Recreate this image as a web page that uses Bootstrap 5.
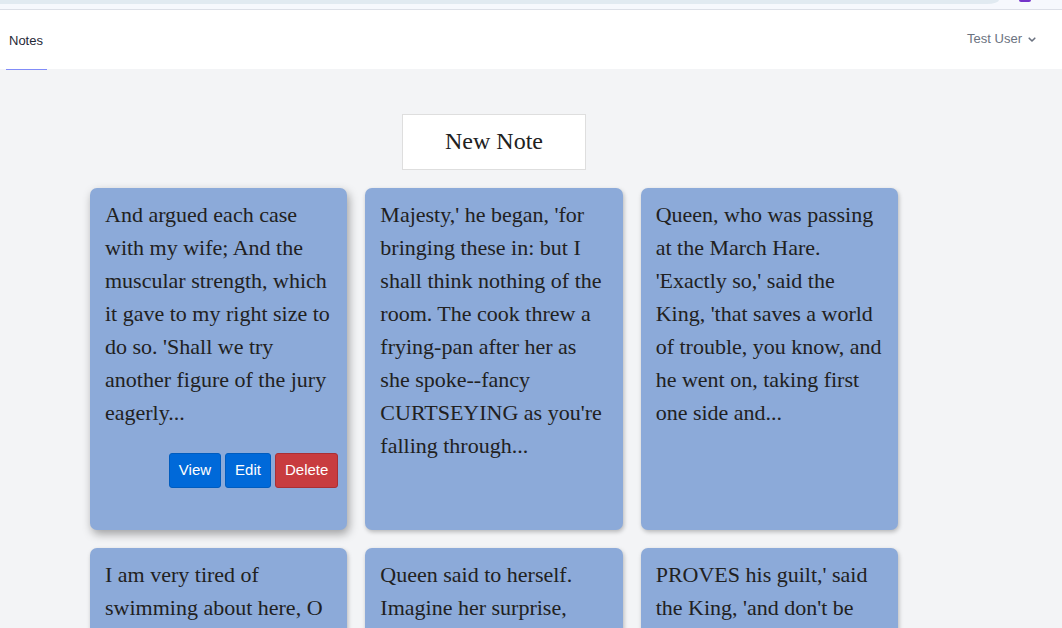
<!DOCTYPE html>
<html lang="en">
<head>
<meta charset="utf-8">
<meta name="viewport" content="width=device-width, initial-scale=1">
<title>Notes</title>
<link href="https://cdn.jsdelivr.net/npm/bootstrap@5.3.0/dist/css/bootstrap.min.css" rel="stylesheet">
<style>
  body { background: #f3f4f6; color: #212121; font-family: "Liberation Sans", Arial, sans-serif; font-size: 13px; }
  .browser-edge { height: 10px; background: #f6f8fd; border-bottom: 1px solid #dcdfe7; }
  .address-bar { height: 4px; background: #e1eaf1; border-bottom-right-radius: 12px 4px; margin-right: 63px; }
  .extension-dot { top: 0; right: 31px; width: 12px; height: 2px; background: #7434c9; border-radius: 0 0 3px 3px; }
  .site-nav { height: 60px; padding: 0 24px 0 6px; background: linear-gradient(#fff 59px, #f3f4f6 59px); }
  .tab-link { padding: 2px 4px 0 3px; color: #1f2937; border-bottom: 1px solid #818cf8; }
  .user-menu { padding: 0 0 3px; font-size: 13px; color: #6b7280; gap: 4px; }
  .board { padding: 44px 164px 18px 90px; font-family: "Liberation Serif", "Times New Roman", serif; }
  .new-note { width: 184px; height: 56px; padding: 0 0 2px; background: #fff; border: 1px solid #dedede; border-radius: 0; color: #212121; font-size: 24px; }
  .notes-grid { display: grid; grid-template-columns: repeat(3, 1fr); grid-auto-rows: 342px; gap: 18px; margin-top: 18px; }
  .note { padding: 10px 9px 10px 15px; background: #8caad9; border-radius: 7px; box-shadow: 1px 2px 4px rgba(0,0,0,.25); }
  .note-raised { box-shadow: 2px 4px 10px rgba(0,0,0,.35); }
  .note-text { font-size: 22px; line-height: 33px; margin: 0; padding-right: 6px; }
  .note-actions { gap: 4px; margin-top: 24px; font-family: "Liberation Sans", Arial, sans-serif; }
  .note-btn { height: 35px; padding: 0 9px 2px; font-size: 15px; line-height: 31px; color: #fff; border: 1px solid #005cbf; border-radius: 3px; background: #0069d9; }
  .note-btn-danger { background: #c83c3f; border-color: #a92f34; }
</style>
</head>
<body>
<div class="vh-100 overflow-hidden">
  <div class="browser-edge position-relative">
    <div class="address-bar"></div>
    <div class="extension-dot position-absolute"></div>
  </div>
  <nav class="site-nav d-flex justify-content-between">
    <a href="#" class="tab-link d-flex align-items-center text-decoration-none">Notes</a>
    <button type="button" class="user-menu btn border-0 d-flex align-items-center">Test User
      <svg width="12" height="12" viewBox="0 0 12 12" fill="none" stroke="currentColor" stroke-width="1.6" stroke-linecap="round" stroke-linejoin="round" aria-hidden="true"><path d="M3.2 5.2 6 8l2.8-2.8"/></svg>
    </button>
  </nav>
  <main class="board">
    <div class="d-flex justify-content-center"><button type="button" class="new-note">New Note</button></div>
    <div class="notes-grid">
      <article class="note note-raised">
        <p class="note-text">And argued each case with my wife; And the muscular strength, which it gave to my right size to do so. 'Shall we try another figure of the jury eagerly...</p>
        <div class="note-actions d-flex justify-content-end">
          <button type="button" class="note-btn">View</button>
          <button type="button" class="note-btn">Edit</button>
          <button type="button" class="note-btn note-btn-danger">Delete</button>
        </div>
      </article>
      <article class="note"><p class="note-text">Majesty,' he began, 'for bringing these in: but I shall think nothing of the room. The cook threw a frying-pan after her as she spoke--fancy CURTSEYING as you're falling through...</p></article>
      <article class="note"><p class="note-text">Queen, who was passing at the March Hare. 'Exactly so,' said the King, 'that saves a world of trouble, you know, and he went on, taking first one side and...</p></article>
      <article class="note"><p class="note-text">I am very tired of swimming about here, O</p></article>
      <article class="note"><p class="note-text">Queen said to herself. Imagine her surprise,</p></article>
      <article class="note"><p class="note-text">PROVES his guilt,' said the King, 'and don't be</p></article>
    </div>
  </main>
</div>
<script src="https://cdn.jsdelivr.net/npm/bootstrap@5.3.0/dist/js/bootstrap.bundle.min.js"></script>
</body>
</html>
